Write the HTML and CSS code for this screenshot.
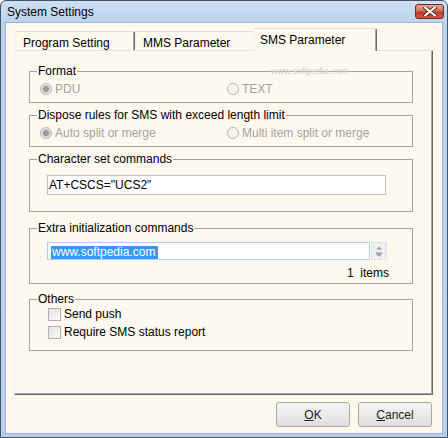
FILE: index.html
```html
<!DOCTYPE html>
<html lang="en">
<head>
    <meta charset="UTF-8">
    <title>System Settings</title>
    <link rel="stylesheet" href="styles.css">
</head>
<body>
    <div class="window">
        <div class="titlebar">
            <span class="title">System Settings</span>
            <button class="close" aria-label="Close">
                <svg width="14" height="9" viewBox="0 0 14 9">
                    <path d="M2 0.5 L12 8.5 M12 0.5 L2 8.5" stroke="#5a1e18" stroke-width="4" stroke-linecap="round"/>
                    <path d="M2 0.5 L12 8.5 M12 0.5 L2 8.5" stroke="#fff" stroke-width="2.2" stroke-linecap="round"/>
                </svg>
            </button>
        </div>
        <div class="client">
            <div class="tabs">
                <div class="tab first">Program Setting</div>
                <div class="tab">MMS Parameter</div>
                <div class="tab active">SMS Parameter</div>
            </div>
            <div class="panel">
                <fieldset class="group g-format">
                    <legend>Format</legend>
                    <div class="opts">
                        <label class="opt"><input type="radio" name="fmt" checked disabled>PDU</label>
                        <label class="opt"><input type="radio" name="fmt" disabled>TEXT</label>
                    </div>
                </fieldset>
                <fieldset class="group g-dispose">
                    <legend>Dispose rules for SMS with exceed length limit</legend>
                    <div class="opts">
                        <label class="opt"><input type="radio" name="split" checked disabled>Auto split or merge</label>
                        <label class="opt"><input type="radio" name="split" disabled>Multi item split or merge</label>
                    </div>
                </fieldset>
                <fieldset class="group g-charset">
                    <legend>Character set commands</legend>
                    <div class="field">AT+CSCS="UCS2"</div>
                </fieldset>
                <fieldset class="group g-extra">
                    <legend>Extra initialization commands</legend>
                    <div class="spinrow">
                        <div class="list"><span class="sel">www.softpedia.com</span></div>
                        <div class="spin">
                            <svg width="14" height="16" viewBox="0 0 14 16">
                                <path d="M4 6.5 L7 3.5 L10 6.5 Z" fill="#9a9a9a"/>
                                <path d="M4 9.5 L10 9.5 M4 10.5 L7 13.5 L10 10.5 Z" fill="#9a9a9a" stroke="#9a9a9a" stroke-width="0.6"/>
                            </svg>
                        </div>
                    </div>
                    <div class="count">1  items</div>
                </fieldset>
                <fieldset class="group g-others">
                    <legend>Others</legend>
                    <div class="checks">
                        <label class="chk"><input type="checkbox">Send push</label>
                        <label class="chk"><input type="checkbox">Require SMS status report</label>
                    </div>
                </fieldset>
            </div>
            <div class="buttons">
                <button class="btn"><u>O</u>K</button>
                <button class="btn"><u>C</u>ancel</button>
            </div>
        </div>
        <span class="mark-small">www.softpedia.com</span>
    </div>
</body>
</html>
```

FILE: styles.css
```css
html{
    background: #fff;
}
body{
    margin: 0;
    font-family: "Liberation Sans", Arial, sans-serif;
    font-size: 12px;
    color: #000;
}
.window{
    position: relative;
    width: 448px;
    height: 438px;
    box-sizing: border-box;
    border: 1px solid #4a5566;
    border-radius: 6px 6px 0 0;
    background: linear-gradient(#cddff4, #bcd3ee 22px, #b9d0ec);
    padding: 0 4px 3px 4px;
    display: flex;
    flex-direction: column;
}
.titlebar{
    height: 21px;
    display: flex;
    align-items: center;
    justify-content: space-between;
}
.title{
    padding-left: 2px;
    font-size: 12px;
}
.close{
    width: 29px;
    height: 15px;
    margin-right: -1px;
    padding: 0;
    border: 1px solid #6b2a22;
    border-radius: 3px;
    background: linear-gradient(#e7a597, #d0705f 45%, #b8402f 55%, #c85a45);
    display: flex;
    align-items: center;
    justify-content: center;
}
.client{
    flex: 1;
    background: #fdf9ef;
    border: 1px solid #9fb4cf;
    display: flex;
    flex-direction: column;
}
.tabs{
    display: flex;
    align-items: flex-end;
    height: 21px;
    margin: 6px 0 0 9px;
}
.tab{
    height: 19px;
    box-sizing: border-box;
    padding: 4px 0 0 7px;
    line-height: 14px;
    border-top: 1px solid #dcdcdc;
    border-left: 1px solid #f4f4f4;
    border-right: 1px solid #6e6e6e;
    box-shadow: inset -1px 0 #a6a6a6;
    border-radius: 2px 2px 0 0;
    background: #fdf9ef;
}
.tab.first{
    width: 120px;
}
.tab:nth-child(2){
    width: 119px;
    border-right: none;
    box-shadow: none;
}
.tab.active{
    position: relative;
    z-index: 1;
    width: 123px;
    height: 23px;
    margin-bottom: -1px;
    padding: 4px 0 0 5px;
    border-top: 1px solid #e0e0e0;
}
.panel{
    width: 419px;
    height: 345px;
    box-sizing: border-box;
    margin-left: 8px;
    padding-top: 13px;
    border-top: 1px solid #e2e2e2;
    border-left: 1px solid #f2f2f2;
    border-right: 1px solid #6a6a6a;
    border-bottom: 1px solid #6a6a6a;
    box-shadow: inset -1px -1px #a8a8a8;
}
.group{
    width: 384px;
    box-sizing: border-box;
    margin: 0 0 0 14px;
    padding: 0;
    border: 1px solid #a4a4a4;
    min-width: 0;
}
.group legend{
    margin-left: 7px;
    padding: 0 1px;
    line-height: 14px;
}
.g-dispose{ margin-top: 5px; }
.g-charset{ margin-top: 5px; }
.g-extra{ margin-top: 9px; }
.g-others{ margin-top: 8px; }

.opts{
    display: grid;
    grid-template-columns: 187px 1fr;
    margin: 4px 0 6px 10px;
}
.opt{
    display: flex;
    align-items: center;
    gap: 3px;
    height: 14px;
    color: #a2a2a2;
}
.opt input{
    appearance: none;
    -webkit-appearance: none;
    width: 12px;
    height: 12px;
    margin: 0;
    border: 1px solid #b4b4b4;
    border-radius: 50%;
    background: #f6f5f1;
}
.opt input:checked{
    background: radial-gradient(circle, #9c9c9c 0 2.6px, #c4c4c4 3.2px, #ecebe7 4.6px);
}
.field{
    width: 339px;
    height: 20px;
    box-sizing: border-box;
    margin: 9px 0 16px 17px;
    padding-left: 1px;
    border: 1px solid #c2c2b6;
    background: #fff;
    line-height: 18px;
}
.spinrow{
    display: flex;
    gap: 1px;
    margin: 7px 0 0 17px;
}
.list{
    width: 323px;
    height: 18px;
    box-sizing: border-box;
    padding: 2px 0 0 3px;
    border: 1px solid #a8cff2;
    background: #fff;
}
.sel{
    display: inline-block;
    padding: 0 3px 0 1px;
    line-height: 13px;
    background: #3399ff;
    color: #fff;
}
.spin{
    width: 16px;
    height: 18px;
    box-sizing: border-box;
    border: 1px solid #e4e4e4;
    background: #efefef;
    display: flex;
    justify-content: center;
}
.count{
    margin: 6px 23px 3px 0;
    text-align: right;
    line-height: 14px;
    white-space: pre;
}
.checks{
    display: flex;
    flex-direction: column;
    gap: 4px;
    margin: 1px 0 11px 18px;
}
.chk{
    display: flex;
    align-items: center;
    gap: 3px;
    height: 14px;
}
.chk input{
    appearance: none;
    -webkit-appearance: none;
    width: 13px;
    height: 13px;
    margin: 0;
    border: 1px solid #b2b2b2;
    background: linear-gradient(135deg, #e2e2e0, #fbfbfa);
}
.buttons{
    display: flex;
    justify-content: flex-end;
    gap: 8px;
    margin-top: 7px;
    padding-right: 10px;
}
.btn{
    width: 74px;
    height: 25px;
    padding: 0;
    border: 1px solid #a9a9a9;
    border-radius: 3px;
    background: linear-gradient(#f4f4f4, #ebebeb 50%, #dedede);
    font-family: "Liberation Sans", Arial, sans-serif;
    font-size: 12px;
    color: #222;
}
.mark-small{
    position: absolute;
    left: 270px;
    top: 65px;
    font-size: 9px;
    color: #d4d0c6;
    pointer-events: none;
}
```
